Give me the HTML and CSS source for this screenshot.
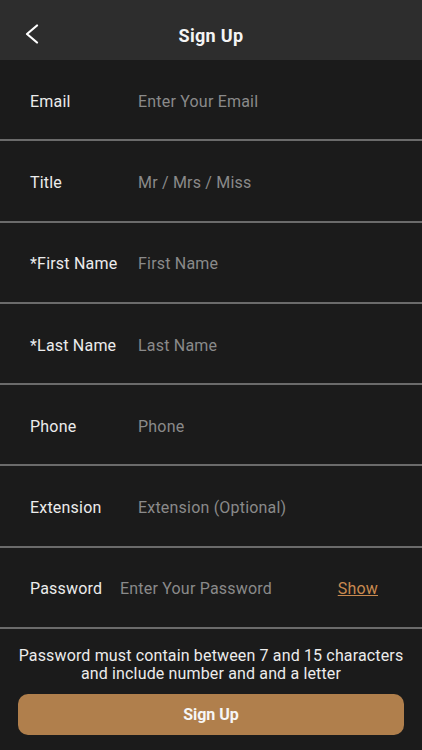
FILE: index.html
```html
<!DOCTYPE html>
<html lang="en">
<head>
    <meta charset="UTF-8">
    <meta name="viewport" content="width=device-width, initial-scale=1.0">
    <title>Sign Up</title>
    <link rel="stylesheet" href="styles.css">
</head>
<body>
    <header class="topbar">
        <a class="back" href="#">
            <svg width="16" height="20" viewBox="0 0 16 20"><path d="M13 1.5 L3 10 L13 18.5" fill="none" stroke="#fff" stroke-width="2.2" stroke-linecap="round" stroke-linejoin="round"/></svg>
        </a>
        <h1>Sign Up</h1>
    </header>

    <form class="form">
        <label class="row"><span class="label">Email</span><span class="placeholder">Enter Your Email</span></label>
        <label class="row"><span class="label">Title</span><span class="placeholder">Mr / Mrs / Miss</span></label>
        <label class="row"><span class="label">*First Name</span><span class="placeholder">First Name</span></label>
        <label class="row"><span class="label">*Last Name</span><span class="placeholder">Last Name</span></label>
        <label class="row"><span class="label">Phone</span><span class="placeholder">Phone</span></label>
        <label class="row"><span class="label">Extension</span><span class="placeholder">Extension (Optional)</span></label>
        <label class="row row-password">
            <span class="label">Password</span>
            <span class="placeholder pw">Enter Your Password</span>
            <a class="show" href="#">Show</a>
        </label>

        <p class="hint">Password must contain between 7 and 15 characters<br>and include number and and a letter</p>
        <button class="submit" type="button">Sign Up</button>
    </form>
</body>
</html>
```

FILE: styles.css
```css
* { margin: 0; padding: 0; box-sizing: border-box; }
body {
    font-family: Roboto, "Noto Sans", Arial, sans-serif;
    background: #1b1b1b;
    color: #ececec;
    width: 422px;
    height: 750px;
    overflow: hidden;
}
.topbar {
    height: 60px; background: #2d2d2d; display: flex; align-items: center; justify-content: center; position: relative;
}
.topbar h1 { font-size: 18px; font-weight: 700; color: #f4f4f4; padding-top: 10px; letter-spacing: 0.3px; }
.back { position: absolute; left: 24px; top: 24px; display: flex; }
.form { display: flex; flex-direction: column; }
.row {
    height: 81.3px; display: flex; align-items: center; padding: 3px 0 0 30px; border-bottom: 2px solid #6b6b6b; font-size: 16px; letter-spacing: 0.2px;
}
.label { width: 108px; color: #ececec; }
.placeholder { color: #8a8a8a; }
.row-password .label { width: 90px; }
.pw { flex: 1; }
.show { color: #c98a50; text-decoration: underline; margin-right: 44px; font-size: 16px; }
.hint { text-align: center; font-size: 16px; line-height: 18px; color: #ececec; margin-top: 18px; letter-spacing: 0.15px; }
.submit {
    margin: 11px 18px 0; height: 41px; border: none; border-radius: 10px; background: #b07f4c; color: #f6f6f6;
    font-family: inherit; font-size: 16px; font-weight: 700;
}
```
